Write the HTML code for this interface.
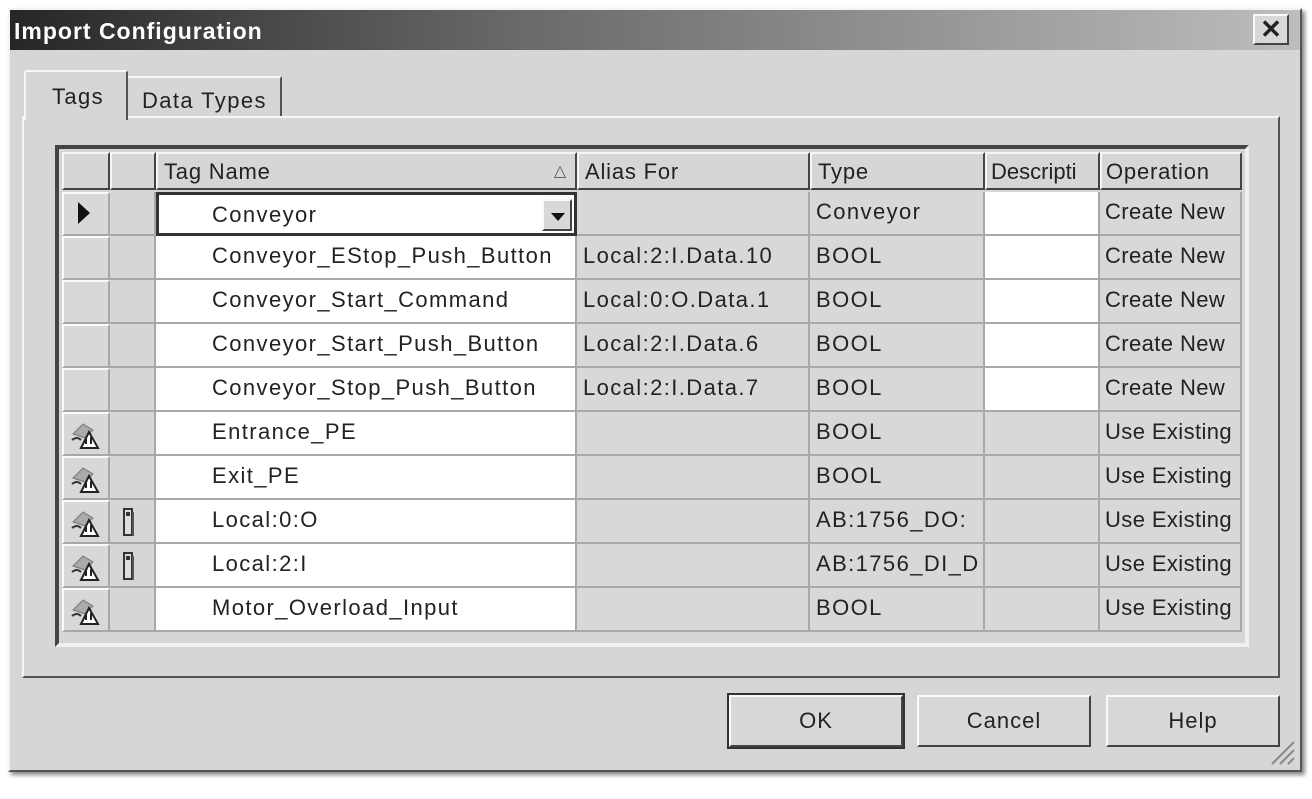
<!DOCTYPE html>
<html><head><meta charset="utf-8"><style>
*{margin:0;padding:0;box-sizing:border-box}
body{width:1312px;height:799px;background:#fff;position:relative;overflow:hidden;font-family:"Liberation Sans",sans-serif;color:#222}
.a{position:absolute}
#dlg{left:8px;top:8px;width:1294px;height:764px;background:#d6d6d6;border:2px solid #f4f4f4;border-right-color:#555;border-bottom-color:#555;box-shadow:3px 3px 4px #888}
#title{left:10px;top:10px;width:1290px;height:40px;background:linear-gradient(90deg,#262626 0%,#6a6a6a 40%,#bdbdbd 100%);color:#fff;font-weight:bold;font-size:23px;line-height:42px;padding-left:4px;letter-spacing:1px}
.btn3d{background:#d8d8d8;border:2px solid;border-color:#fafafa #444 #444 #fafafa}
.t{font-size:22px;white-space:nowrap;letter-spacing:1.4px}
.cell{position:absolute;height:44px;line-height:40px;font-size:22px;white-space:nowrap;border-bottom:2px solid #a8a8a8;border-right:2px solid #a8a8a8;overflow:hidden;letter-spacing:1.4px}
.hd{position:absolute;top:152px;height:38px;line-height:36px;font-size:22px;background:#d6d6d6;border:2px solid;border-color:#f6f6f6 #444 #444 #f6f6f6;padding-left:6px;white-space:nowrap;letter-spacing:0.8px;overflow:hidden}
</style></head><body>
<div id="dlg" class="a"></div>
<div id="title" class="a">Import Configuration</div>
<div class="a btn3d" style="left:1253px;top:14px;width:36px;height:31px;font-size:26px;font-weight:bold;line-height:26px;text-align:center">✕</div>

<div class="a" style="left:22px;top:116px;width:1258px;height:562px;border:2px solid;border-color:#f6f6f6 #555 #555 #f6f6f6"></div>
<div class="a" style="left:24px;top:70px;width:104px;height:50px;background:#d6d6d6;border:2px solid;border-color:#f6f6f6 #555 transparent #f6f6f6;border-bottom:none;border-radius:3px 3px 0 0"></div>
<div class="a t" style="left:52px;top:84px">Tags</div>
<div class="a" style="left:128px;top:76px;width:154px;height:40px;border:2px solid;border-color:#f6f6f6 #555 transparent #f6f6f6;border-bottom:none;border-left:none"></div>
<div class="a t" style="left:142px;top:88px">Data Types</div>

<div class="a" style="left:55px;top:145px;width:1194px;height:502px;background:#d6d6d6;border:4px solid;border-color:#444 #f0f0f0 #f0f0f0 #444"></div>

<div class="hd" style="left:62px;width:48px"></div>
<div class="hd" style="left:110px;width:46px"></div>
<div class="hd" style="left:156px;width:421px">Tag Name<span style="position:absolute;right:8px;font-size:16px;color:#555">△</span></div>
<div class="hd" style="left:577px;width:233px">Alias For</div>
<div class="hd" style="left:810px;width:175px">Type</div>
<div class="hd" style="left:985px;width:115px;padding-left:4px;letter-spacing:0">Descripti</div>
<div class="hd" style="left:1100px;width:142px;padding-left:4px">Operation</div>

<div id="rows"></div>
<script>
var rows=[
["Conveyor","","Conveyor",1,"Create New",0],
["Conveyor_EStop_Push_Button","Local:2:I.Data.10","BOOL",1,"Create New",0],
["Conveyor_Start_Command","Local:0:O.Data.1","BOOL",1,"Create New",0],
["Conveyor_Start_Push_Button","Local:2:I.Data.6","BOOL",1,"Create New",0],
["Conveyor_Stop_Push_Button","Local:2:I.Data.7","BOOL",1,"Create New",0],
["Entrance_PE","","BOOL",0,"Use Existing",1],
["Exit_PE","","BOOL",0,"Use Existing",1],
["Local:0:O","","AB:1756_DO:",0,"Use Existing",2],
["Local:2:I","","AB:1756_DI_D",0,"Use Existing",2],
["Motor_Overload_Input","","BOOL",0,"Use Existing",1]];
var h="";
var icon='<svg width="34" height="34" viewBox="0 0 34 34" style="position:absolute;left:5px;top:4px"><path d="M4 16 L14 6 L24 12 L16 20 Z" fill="#aaa" stroke="#777"/><path d="M3 22 q5 -4 9 0" stroke="#333" fill="none" stroke-width="2"/><path d="M12 30 L20 14 L29 30 Z" fill="#fff" stroke="#222" stroke-width="2"/><rect x="16" y="19" width="2" height="7" fill="#222"/><rect x="21" y="19" width="2" height="7" fill="#222"/></svg>';
var mod='<svg width="16" height="30" style="position:absolute;left:12px;top:8px"><rect x="2" y="1" width="8" height="26" fill="#ddd" stroke="#333" stroke-width="2"/><rect x="4" y="4" width="4" height="4" fill="#333"/><line x1="11" y1="4" x2="11" y2="28" stroke="#555" stroke-width="2"/></svg>';
rows.forEach(function(r,i){
 var y=192+i*44;
 h+='<div class="cell btn3d" style="left:62px;top:'+y+'px;width:48px;height:44px;border-width:2px">'+(i==0?'<span style="position:absolute;left:14px;top:8px;width:0;height:0;border-left:12px solid #111;border-top:11px solid transparent;border-bottom:11px solid transparent"></span>':'')+(r[5]?icon:'')+'</div>';
 h+='<div class="cell" style="left:110px;top:'+y+'px;width:46px;background:#d6d6d6">'+(r[5]==2?mod:'')+'</div>';
 if(i==0){h+='<div class="cell" style="left:156px;top:'+y+'px;width:421px;background:#fff;border:3px solid #333;padding-left:53px">'+r[0]+'<span class="btn3d" style="position:absolute;right:2px;top:4px;width:30px;height:32px"><span style="position:absolute;left:7px;top:12px;border-top:8px solid #111;border-left:7px solid transparent;border-right:7px solid transparent"></span></span></div>';}
 else h+='<div class="cell" style="left:156px;top:'+y+'px;width:421px;background:#fff;padding-left:56px">'+r[0]+'</div>';
 h+='<div class="cell" style="left:577px;top:'+y+'px;width:233px;background:#d8d8d8;padding-left:6px">'+r[1]+'</div>';
 h+='<div class="cell" style="left:810px;top:'+y+'px;width:175px;background:#d8d8d8;padding-left:6px">'+r[2]+'</div>';
 h+='<div class="cell" style="left:985px;top:'+y+'px;width:115px;background:'+(r[3]?'#fff':'#d8d8d8')+'"></div>';
 h+='<div class="cell" style="left:1100px;top:'+y+'px;width:142px;background:#d8d8d8;padding-left:5px;letter-spacing:0.4px">'+r[4]+'</div>';
});
document.getElementById("rows").innerHTML=h;
</script>

<div class="a btn3d" style="left:729px;top:695px;width:174px;height:52px;outline:2px solid #333;text-align:center;line-height:48px;font-size:22px;letter-spacing:1px">OK</div>
<div class="a btn3d" style="left:917px;top:695px;width:174px;height:52px;text-align:center;line-height:48px;font-size:22px;letter-spacing:1px">Cancel</div>
<div class="a btn3d" style="left:1106px;top:695px;width:174px;height:52px;text-align:center;line-height:48px;font-size:22px;letter-spacing:1px">Help</div>
<svg class="a" style="left:1268px;top:738px" width="28" height="28"><path d="M26 4 L4 26 M26 12 L12 26 M26 20 L20 26" stroke="#888" stroke-width="2"/></svg>
</body></html>
